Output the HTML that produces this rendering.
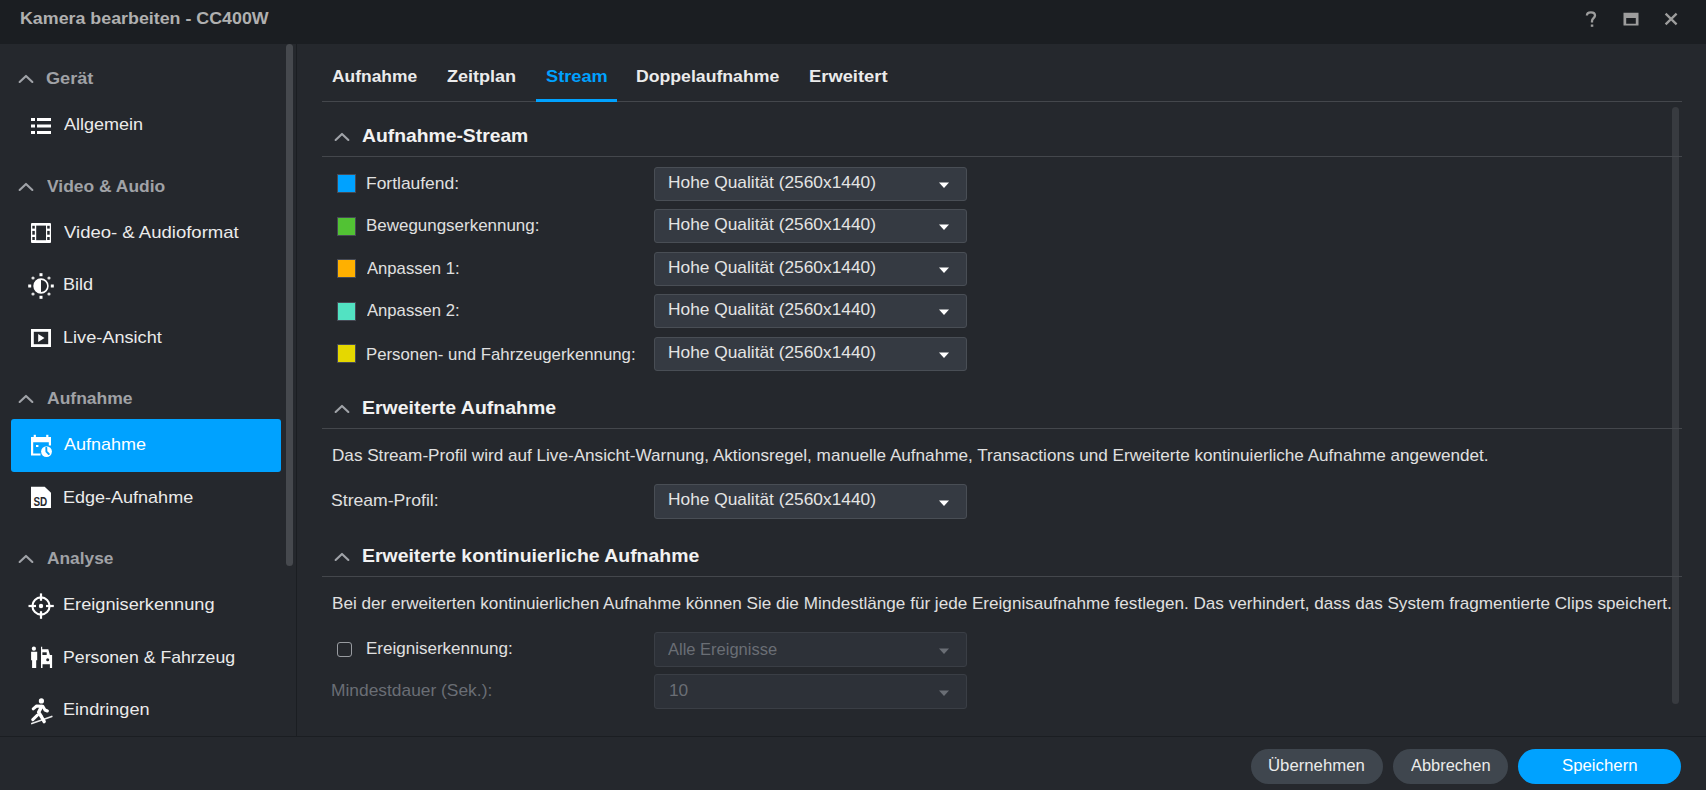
<!DOCTYPE html>
<html><head><meta charset="utf-8"><title>Kamera bearbeiten</title>
<style>
html,body{margin:0;padding:0;width:1706px;height:790px;overflow:hidden;background:#25282d;font-family:"Liberation Sans", sans-serif}
.t{position:absolute;white-space:nowrap;line-height:20px;transform-origin:0 0;font-family:"Liberation Sans", sans-serif}
svg{display:block}
</style></head><body>
<div style="position:absolute;left:0px;top:0px;width:1706px;height:44px;background:#1b1e22;"></div>
<div style="position:absolute;left:0px;top:44px;width:1706px;height:746px;background:#25282d;"></div>
<div style="position:absolute;left:296px;top:44px;width:1px;height:692px;background:#1b1e22;"></div>
<div style="position:absolute;left:0px;top:736px;width:1706px;height:1px;background:#1b1e22;"></div>
<div style="position:absolute;left:286px;top:44px;width:7px;height:522px;background:#46494e;border-radius:4px"></div>
<div style="position:absolute;left:1672px;top:107px;width:7px;height:597px;background:#383b40;border-radius:4px"></div>
<div style="position:absolute;left:11px;top:419px;width:270px;height:53px;background:#00a2ff;border-radius:3px"></div>
<div style="position:absolute;left:322px;top:101px;width:1360px;height:1px;background:#44474c;"></div>
<div style="position:absolute;left:536px;top:99px;width:81px;height:2.6px;background:#00a2ff;"></div>
<div style="position:absolute;left:322px;top:156px;width:1360px;height:1px;background:#44474c;"></div>
<div style="position:absolute;left:322px;top:428px;width:1360px;height:1px;background:#44474c;"></div>
<div style="position:absolute;left:322px;top:576px;width:1360px;height:1px;background:#44474c;"></div>
<div style="position:absolute;left:337px;top:174px;width:17px;height:17px;background:#00a2ff;border:1px solid #464a55"></div>
<div style="position:absolute;left:337px;top:217px;width:17px;height:17px;background:#52c234;border:1px solid #464a55"></div>
<div style="position:absolute;left:337px;top:259px;width:17px;height:17px;background:#ffb000;border:1px solid #464a55"></div>
<div style="position:absolute;left:337px;top:302px;width:17px;height:17px;background:#52e2c2;border:1px solid #464a55"></div>
<div style="position:absolute;left:337px;top:344px;width:17px;height:17px;background:#e5d800;border:1px solid #464a55"></div>
<div style="position:absolute;left:654px;top:167px;width:311px;height:32px;background:#353a42;border:1px solid #494e55;border-radius:3px"></div>
<svg style="position:absolute;left:938px;top:182.0px" width="12" height="7" viewBox="0 0 12 7"><path d="M1 0.5 L11 0.5 L6 6 Z" fill="#ffffff"/></svg>
<div style="position:absolute;left:654px;top:209px;width:311px;height:32px;background:#353a42;border:1px solid #494e55;border-radius:3px"></div>
<svg style="position:absolute;left:938px;top:224.0px" width="12" height="7" viewBox="0 0 12 7"><path d="M1 0.5 L11 0.5 L6 6 Z" fill="#ffffff"/></svg>
<div style="position:absolute;left:654px;top:252px;width:311px;height:32px;background:#353a42;border:1px solid #494e55;border-radius:3px"></div>
<svg style="position:absolute;left:938px;top:267.0px" width="12" height="7" viewBox="0 0 12 7"><path d="M1 0.5 L11 0.5 L6 6 Z" fill="#ffffff"/></svg>
<div style="position:absolute;left:654px;top:294px;width:311px;height:32px;background:#353a42;border:1px solid #494e55;border-radius:3px"></div>
<svg style="position:absolute;left:938px;top:309.0px" width="12" height="7" viewBox="0 0 12 7"><path d="M1 0.5 L11 0.5 L6 6 Z" fill="#ffffff"/></svg>
<div style="position:absolute;left:654px;top:337px;width:311px;height:32px;background:#353a42;border:1px solid #494e55;border-radius:3px"></div>
<svg style="position:absolute;left:938px;top:352.0px" width="12" height="7" viewBox="0 0 12 7"><path d="M1 0.5 L11 0.5 L6 6 Z" fill="#ffffff"/></svg>
<div style="position:absolute;left:654px;top:484px;width:311px;height:33px;background:#353a42;border:1px solid #494e55;border-radius:3px"></div>
<svg style="position:absolute;left:938px;top:499.5px" width="12" height="7" viewBox="0 0 12 7"><path d="M1 0.5 L11 0.5 L6 6 Z" fill="#ffffff"/></svg>
<div style="position:absolute;left:654px;top:632px;width:311px;height:33px;background:#2d3138;border:1px solid #3a3e45;border-radius:3px"></div>
<svg style="position:absolute;left:938px;top:647.5px" width="12" height="7" viewBox="0 0 12 7"><path d="M1 0.5 L11 0.5 L6 6 Z" fill="#6a6e75"/></svg>
<div style="position:absolute;left:654px;top:674px;width:311px;height:33px;background:#2d3138;border:1px solid #3a3e45;border-radius:3px"></div>
<svg style="position:absolute;left:938px;top:689.5px" width="12" height="7" viewBox="0 0 12 7"><path d="M1 0.5 L11 0.5 L6 6 Z" fill="#6a6e75"/></svg>
<div style="position:absolute;left:337px;top:642px;width:12.5px;height:12.5px;border:1.3px solid #999ca1;border-radius:3px"></div>
<div style="position:absolute;left:1251px;top:749px;width:132px;height:35px;background:#3f464e;border-radius:18px"></div>
<div style="position:absolute;left:1393px;top:749px;width:115px;height:35px;background:#3f464e;border-radius:18px"></div>
<div style="position:absolute;left:1518px;top:749px;width:163px;height:35px;background:#00a2ff;border-radius:18px"></div>
<svg style="position:absolute;left:16.8px;top:72.6px" width="18" height="12" viewBox="0 0 18 12"><path d="M2.65 8.95 L9 3 L15.35 8.95" fill="none" stroke="#a0a3a8" stroke-width="2.15" stroke-linecap="round" stroke-linejoin="round"/></svg>
<svg style="position:absolute;left:16.8px;top:180.6px" width="18" height="12" viewBox="0 0 18 12"><path d="M2.65 8.95 L9 3 L15.35 8.95" fill="none" stroke="#a0a3a8" stroke-width="2.15" stroke-linecap="round" stroke-linejoin="round"/></svg>
<svg style="position:absolute;left:16.8px;top:392.6px" width="18" height="12" viewBox="0 0 18 12"><path d="M2.65 8.95 L9 3 L15.35 8.95" fill="none" stroke="#a0a3a8" stroke-width="2.15" stroke-linecap="round" stroke-linejoin="round"/></svg>
<svg style="position:absolute;left:16.8px;top:552.6px" width="18" height="12" viewBox="0 0 18 12"><path d="M2.65 8.95 L9 3 L15.35 8.95" fill="none" stroke="#a0a3a8" stroke-width="2.15" stroke-linecap="round" stroke-linejoin="round"/></svg>
<svg style="position:absolute;left:332.7px;top:130.7px" width="18" height="12" viewBox="0 0 18 12"><path d="M2.65 8.95 L9 3 L15.35 8.95" fill="none" stroke="#a0a3a8" stroke-width="2.15" stroke-linecap="round" stroke-linejoin="round"/></svg>
<svg style="position:absolute;left:332.7px;top:402.5px" width="18" height="12" viewBox="0 0 18 12"><path d="M2.65 8.95 L9 3 L15.35 8.95" fill="none" stroke="#a0a3a8" stroke-width="2.15" stroke-linecap="round" stroke-linejoin="round"/></svg>
<svg style="position:absolute;left:332.7px;top:550.5px" width="18" height="12" viewBox="0 0 18 12"><path d="M2.65 8.95 L9 3 L15.35 8.95" fill="none" stroke="#a0a3a8" stroke-width="2.15" stroke-linecap="round" stroke-linejoin="round"/></svg>
<svg style="position:absolute;left:31px;top:118px" width="20" height="16" viewBox="0 0 20 16"><rect x="0" y="0" width="4" height="3" fill="#ffffff"/><rect x="6" y="0" width="14" height="3" fill="#ffffff"/><rect x="0" y="6.5" width="4" height="3" fill="#ffffff"/><rect x="6" y="6.5" width="14" height="3" fill="#ffffff"/><rect x="0" y="13" width="4" height="3" fill="#ffffff"/><rect x="6" y="13" width="14" height="3" fill="#ffffff"/></svg>
<svg style="position:absolute;left:31px;top:223px" width="20" height="20" viewBox="0 0 20 20"><rect x="0" y="0" width="20" height="20" rx="1" fill="#ffffff"/><rect x="5.2" y="2.6" width="9.8" height="14.6" fill="#25282d"/><rect x="1.3" y="2.8" width="2.5" height="2.8" fill="#25282d"/><rect x="1.3" y="7.9" width="2.5" height="3.8" fill="#25282d"/><rect x="1.3" y="14" width="2.5" height="3" fill="#25282d"/><rect x="16.2" y="2.8" width="2.5" height="2.8" fill="#25282d"/><rect x="16.2" y="7.9" width="2.5" height="3.8" fill="#25282d"/><rect x="16.2" y="14" width="2.5" height="3" fill="#25282d"/></svg>
<svg style="position:absolute;left:28px;top:273px" width="26" height="26" viewBox="0 0 26 26"><rect x="11.50" y="0.20" width="3" height="3" fill="#ffffff"/><circle cx="20.99" cy="5.01" r="1.6" fill="#ffffff" opacity="0.85"/><rect x="22.80" y="11.50" width="3" height="3" fill="#ffffff"/><circle cx="20.99" cy="20.99" r="1.6" fill="#ffffff" opacity="0.85"/><rect x="11.50" y="22.80" width="3" height="3" fill="#ffffff"/><circle cx="5.01" cy="20.99" r="1.6" fill="#ffffff" opacity="0.85"/><rect x="0.20" y="11.50" width="3" height="3" fill="#ffffff"/><circle cx="5.01" cy="5.01" r="1.6" fill="#ffffff" opacity="0.85"/><circle cx="13" cy="13" r="6.9" fill="none" stroke="#ffffff" stroke-width="1.6"/><path d="M13 6.1 A6.9 6.9 0 0 0 13 19.9 Z" fill="#ffffff"/></svg>
<svg style="position:absolute;left:31px;top:329px" width="20" height="18" viewBox="0 0 20 18"><rect x="1.4" y="1.4" width="17.2" height="15.2" fill="none" stroke="#ffffff" stroke-width="2.8"/><path d="M7.2 5 L13.5 9 L7.2 13 Z" fill="#ffffff"/></svg>
<svg style="position:absolute;left:31px;top:434px" width="22" height="24" viewBox="0 0 22 24"><path d="M0 3 H20 V11.5 H17.8 V8.2 H2.2 V19.5 H9.5 V21.5 H0 Z" fill="#ffffff"/><rect x="2.7" y="0.8" width="2.2" height="3" fill="#ffffff"/><rect x="15.2" y="0.8" width="2.2" height="3" fill="#ffffff"/><rect x="5" y="11" width="2.4" height="2" fill="#ffffff"/><circle cx="15.5" cy="17.6" r="5.4" fill="#ffffff"/><path d="M15.3 13.8 L15.4 17.6 L17.8 20" fill="none" stroke="#00a2ff" stroke-width="1.9" stroke-linecap="round" stroke-linejoin="round"/></svg>
<svg style="position:absolute;left:31px;top:486px" width="20" height="22" viewBox="0 0 20 22"><path d="M0 0.7 H13.7 L20 6.7 V21.9 H0 Z" fill="#ffffff"/><text x="2.5" y="19.5" font-family="Liberation Sans" font-weight="bold" font-size="12.8" fill="#25282d" textLength="13.8" lengthAdjust="spacingAndGlyphs">SD</text></svg>
<svg style="position:absolute;left:28px;top:593px" width="26" height="26" viewBox="0 0 26 26"><circle cx="13" cy="13" r="8.6" fill="none" stroke="#ffffff" stroke-width="2.1"/><circle cx="13" cy="13" r="2.2" fill="#ffffff"/><rect x="11.9" y="0.4" width="2.2" height="7.4" fill="#ffffff"/><rect x="11.9" y="18.2" width="2.2" height="7.6" fill="#ffffff"/><rect x="0.5" y="11.9" width="7.5" height="2.2" fill="#ffffff"/><rect x="18" y="11.9" width="7.8" height="2.2" fill="#ffffff"/></svg>
<svg style="position:absolute;left:31px;top:646px" width="22" height="23" viewBox="0 0 22 23"><circle cx="2.9" cy="2.7" r="2.1" fill="#ffffff"/><path d="M0.1 5.7 H6.2 V14.2 H5.2 V21.9 H1.1 V14.2 H0.1 Z" fill="#ffffff"/><path d="M10 0.7 H11.2 V3.3 H17.3 L18.9 9 H21.1 V21.9 H18.9 V18.3 H11.5 V21.9 H10 Z" fill="#ffffff"/><rect x="11.4" y="6.3" width="4.3" height="2.7" fill="#25282d"/><circle cx="16.7" cy="13.8" r="1.5" fill="#25282d"/></svg>
<svg style="position:absolute;left:31px;top:697px" width="22" height="28" viewBox="0 0 22 28"><circle cx="10.4" cy="3.9" r="2.6" fill="#ffffff"/><path d="M2.2 11.8 L5.6 9 L11.8 9.2 L14 13 L16.4 14" fill="none" stroke="#ffffff" stroke-width="3" stroke-linecap="round" stroke-linejoin="round"/><path d="M10.6 9.6 L7.6 15.2 L10.6 20 L13.2 24.6" fill="none" stroke="#ffffff" stroke-width="3.4" stroke-linecap="round" stroke-linejoin="round"/><path d="M6.4 18.2 L1.8 22.6" fill="none" stroke="#ffffff" stroke-width="3" stroke-linecap="round"/><path d="M0.8 26.6 L20.8 19.4" fill="none" stroke="#ffffff" stroke-width="1.6" stroke-linecap="round" opacity="0.9"/></svg>
<svg style="position:absolute;left:1584px;top:10px" width="14" height="18" viewBox="0 0 14 18"><path d="M2.9 5.6 C2.9 3.3 4.6 2.4 6.9 2.4 C9.3 2.4 11 3.6 11 5.6 C11 8 8 8.4 8 11 V12.6" fill="none" stroke="#9d9d9d" stroke-width="2.3"/><rect x="6.8" y="14.5" width="2.5" height="2.3" fill="#9d9d9d"/></svg>
<svg style="position:absolute;left:1623px;top:12px" width="16" height="14" viewBox="0 0 16 14"><path d="M0.5 0.7 H15.5 V13.4 H0.5 Z M3.2 6 V11.7 H12.8 V6 Z" fill="#9d9d9d" fill-rule="evenodd"/></svg>
<svg style="position:absolute;left:1663px;top:11px" width="16" height="16" viewBox="0 0 16 16"><path d="M2.6 2.6 L13.6 13.4 M13.6 2.6 L2.6 13.4" stroke="#9d9d9d" stroke-width="2.3" fill="none"/></svg>
<div class="t" style="left:19.92px;top:8.40px;font-size:16.5px;font-weight:bold;color:#b0b0b0;transform:scaleX(1.0802)">Kamera bearbeiten - CC400W</div>
<div class="t" style="left:46.00px;top:68.40px;font-size:16.2px;font-weight:bold;color:#a0a2a6;transform:scaleX(1.1211)">Gerät</div>
<div class="t" style="left:47.00px;top:176.40px;font-size:16.2px;font-weight:bold;color:#a0a2a6;transform:scaleX(1.0777)">Video & Audio</div>
<div class="t" style="left:47.00px;top:388.00px;font-size:16.2px;font-weight:bold;color:#a0a2a6;transform:scaleX(1.0817)">Aufnahme</div>
<div class="t" style="left:47.00px;top:548.40px;font-size:16.2px;font-weight:bold;color:#a0a2a6;transform:scaleX(1.0697)">Analyse</div>
<div class="t" style="left:64.00px;top:115.40px;font-size:17px;font-weight:normal;color:#ebebeb;transform:scaleX(1.0594)">Allgemein</div>
<div class="t" style="left:64.00px;top:223.40px;font-size:17px;font-weight:normal;color:#ebebeb;transform:scaleX(1.0895)">Video- & Audioformat</div>
<div class="t" style="left:62.94px;top:275.00px;font-size:17px;font-weight:normal;color:#ebebeb;transform:scaleX(1.0640)">Bild</div>
<div class="t" style="left:62.93px;top:328.00px;font-size:17px;font-weight:normal;color:#ebebeb;transform:scaleX(1.0667)">Live-Ansicht</div>
<div class="t" style="left:64.00px;top:435.00px;font-size:17px;font-weight:normal;color:#ffffff;transform:scaleX(1.0592)">Aufnahme</div>
<div class="t" style="left:62.94px;top:488.40px;font-size:17px;font-weight:normal;color:#ebebeb;transform:scaleX(1.0593)">Edge-Aufnahme</div>
<div class="t" style="left:62.93px;top:595.40px;font-size:17px;font-weight:normal;color:#ebebeb;transform:scaleX(1.0691)">Ereigniserkennung</div>
<div class="t" style="left:62.96px;top:648.40px;font-size:17px;font-weight:normal;color:#ebebeb;transform:scaleX(1.0408)">Personen & Fahrzeug</div>
<div class="t" style="left:62.94px;top:700.00px;font-size:17px;font-weight:normal;color:#ebebeb;transform:scaleX(1.0648)">Eindringen</div>
<div class="t" style="left:332.00px;top:66.40px;font-size:16.5px;font-weight:bold;color:#ebebeb;transform:scaleX(1.0560)">Aufnahme</div>
<div class="t" style="left:447.40px;top:66.40px;font-size:16.5px;font-weight:bold;color:#ebebeb;transform:scaleX(1.0925)">Zeitplan</div>
<div class="t" style="left:545.60px;top:66.40px;font-size:16.5px;font-weight:bold;color:#00a2ff;transform:scaleX(1.1039)">Stream</div>
<div class="t" style="left:636.33px;top:66.40px;font-size:16.5px;font-weight:bold;color:#ebebeb;transform:scaleX(1.0703)">Doppelaufnahme</div>
<div class="t" style="left:809.49px;top:66.40px;font-size:16.5px;font-weight:bold;color:#ebebeb;transform:scaleX(1.1125)">Erweitert</div>
<div class="t" style="left:362.00px;top:126.40px;font-size:17.8px;font-weight:bold;color:#f2f2f2;transform:scaleX(1.0858)">Aufnahme-Stream</div>
<div class="t" style="left:361.50px;top:398.40px;font-size:17.8px;font-weight:bold;color:#f2f2f2;transform:scaleX(1.0952)">Erweiterte Aufnahme</div>
<div class="t" style="left:361.51px;top:546.00px;font-size:17.8px;font-weight:bold;color:#f2f2f2;transform:scaleX(1.0928)">Erweiterte kontinuierliche Aufnahme</div>
<div class="t" style="left:365.54px;top:173.00px;font-size:16.4px;font-weight:normal;color:#e0e0e0;transform:scaleX(1.0640)">Fortlaufend:</div>
<div class="t" style="left:365.57px;top:215.00px;font-size:16.4px;font-weight:normal;color:#e0e0e0;transform:scaleX(1.0342)">Bewegungserkennung:</div>
<div class="t" style="left:366.60px;top:258.00px;font-size:16.4px;font-weight:normal;color:#e0e0e0;transform:scaleX(1.0158)">Anpassen 1:</div>
<div class="t" style="left:366.60px;top:300.40px;font-size:16.4px;font-weight:normal;color:#e0e0e0;transform:scaleX(1.0158)">Anpassen 2:</div>
<div class="t" style="left:365.58px;top:343.60px;font-size:16.4px;font-weight:normal;color:#e0e0e0;transform:scaleX(1.0237)">Personen- und Fahrzeugerkennung:</div>
<div class="t" style="left:667.94px;top:172.30px;font-size:16.4px;font-weight:normal;color:#e4e4e4;transform:scaleX(1.0565)">Hohe Qualität (2560x1440)</div>
<div class="t" style="left:667.94px;top:214.30px;font-size:16.4px;font-weight:normal;color:#e4e4e4;transform:scaleX(1.0565)">Hohe Qualität (2560x1440)</div>
<div class="t" style="left:667.94px;top:257.30px;font-size:16.4px;font-weight:normal;color:#e4e4e4;transform:scaleX(1.0565)">Hohe Qualität (2560x1440)</div>
<div class="t" style="left:667.94px;top:299.30px;font-size:16.4px;font-weight:normal;color:#e4e4e4;transform:scaleX(1.0565)">Hohe Qualität (2560x1440)</div>
<div class="t" style="left:667.94px;top:342.30px;font-size:16.4px;font-weight:normal;color:#e4e4e4;transform:scaleX(1.0565)">Hohe Qualität (2560x1440)</div>
<div class="t" style="left:331.56px;top:445.40px;font-size:16.4px;font-weight:normal;color:#e0e0e0;transform:scaleX(1.0445)">Das Stream-Profil wird auf Live-Ansicht-Warnung, Aktionsregel, manuelle Aufnahme, Transactions und Erweiterte kontinuierliche Aufnahme angewendet.</div>
<div class="t" style="left:331.00px;top:490.00px;font-size:16.4px;font-weight:normal;color:#e0e0e0;transform:scaleX(1.0744)">Stream-Profil:</div>
<div class="t" style="left:667.94px;top:489.40px;font-size:16.4px;font-weight:normal;color:#e4e4e4;transform:scaleX(1.0565)">Hohe Qualität (2560x1440)</div>
<div class="t" style="left:331.56px;top:593.40px;font-size:16.4px;font-weight:normal;color:#e0e0e0;transform:scaleX(1.0436)">Bei der erweiterten kontinuierlichen Aufnahme können Sie die Mindestlänge für jede Ereignisaufnahme festlegen. Das verhindert, dass das System fragmentierte Clips speichert.</div>
<div class="t" style="left:365.96px;top:638.00px;font-size:16.4px;font-weight:normal;color:#e0e0e0;transform:scaleX(1.0381)">Ereigniserkennung:</div>
<div class="t" style="left:668.00px;top:639.00px;font-size:16.4px;font-weight:normal;color:#6a6e75;transform:scaleX(1.0066)">Alle Ereignisse</div>
<div class="t" style="left:330.94px;top:680.40px;font-size:16.4px;font-weight:normal;color:#6a6e75;transform:scaleX(1.0599)">Mindestdauer (Sek.):</div>
<div class="t" style="left:668.94px;top:680.40px;font-size:16.4px;font-weight:normal;color:#6a6e75;transform:scaleX(1.0553)">10</div>
<div class="t" style="left:1268.38px;top:755.40px;font-size:16.4px;font-weight:normal;color:#ebebeb;transform:scaleX(1.0209)">Übernehmen</div>
<div class="t" style="left:1411.00px;top:755.40px;font-size:16.4px;font-weight:normal;color:#ebebeb;transform:scaleX(1.0031)">Abbrechen</div>
<div class="t" style="left:1561.60px;top:755.40px;font-size:16.4px;font-weight:normal;color:#ffffff;transform:scaleX(1.0238)">Speichern</div>
</body></html>
